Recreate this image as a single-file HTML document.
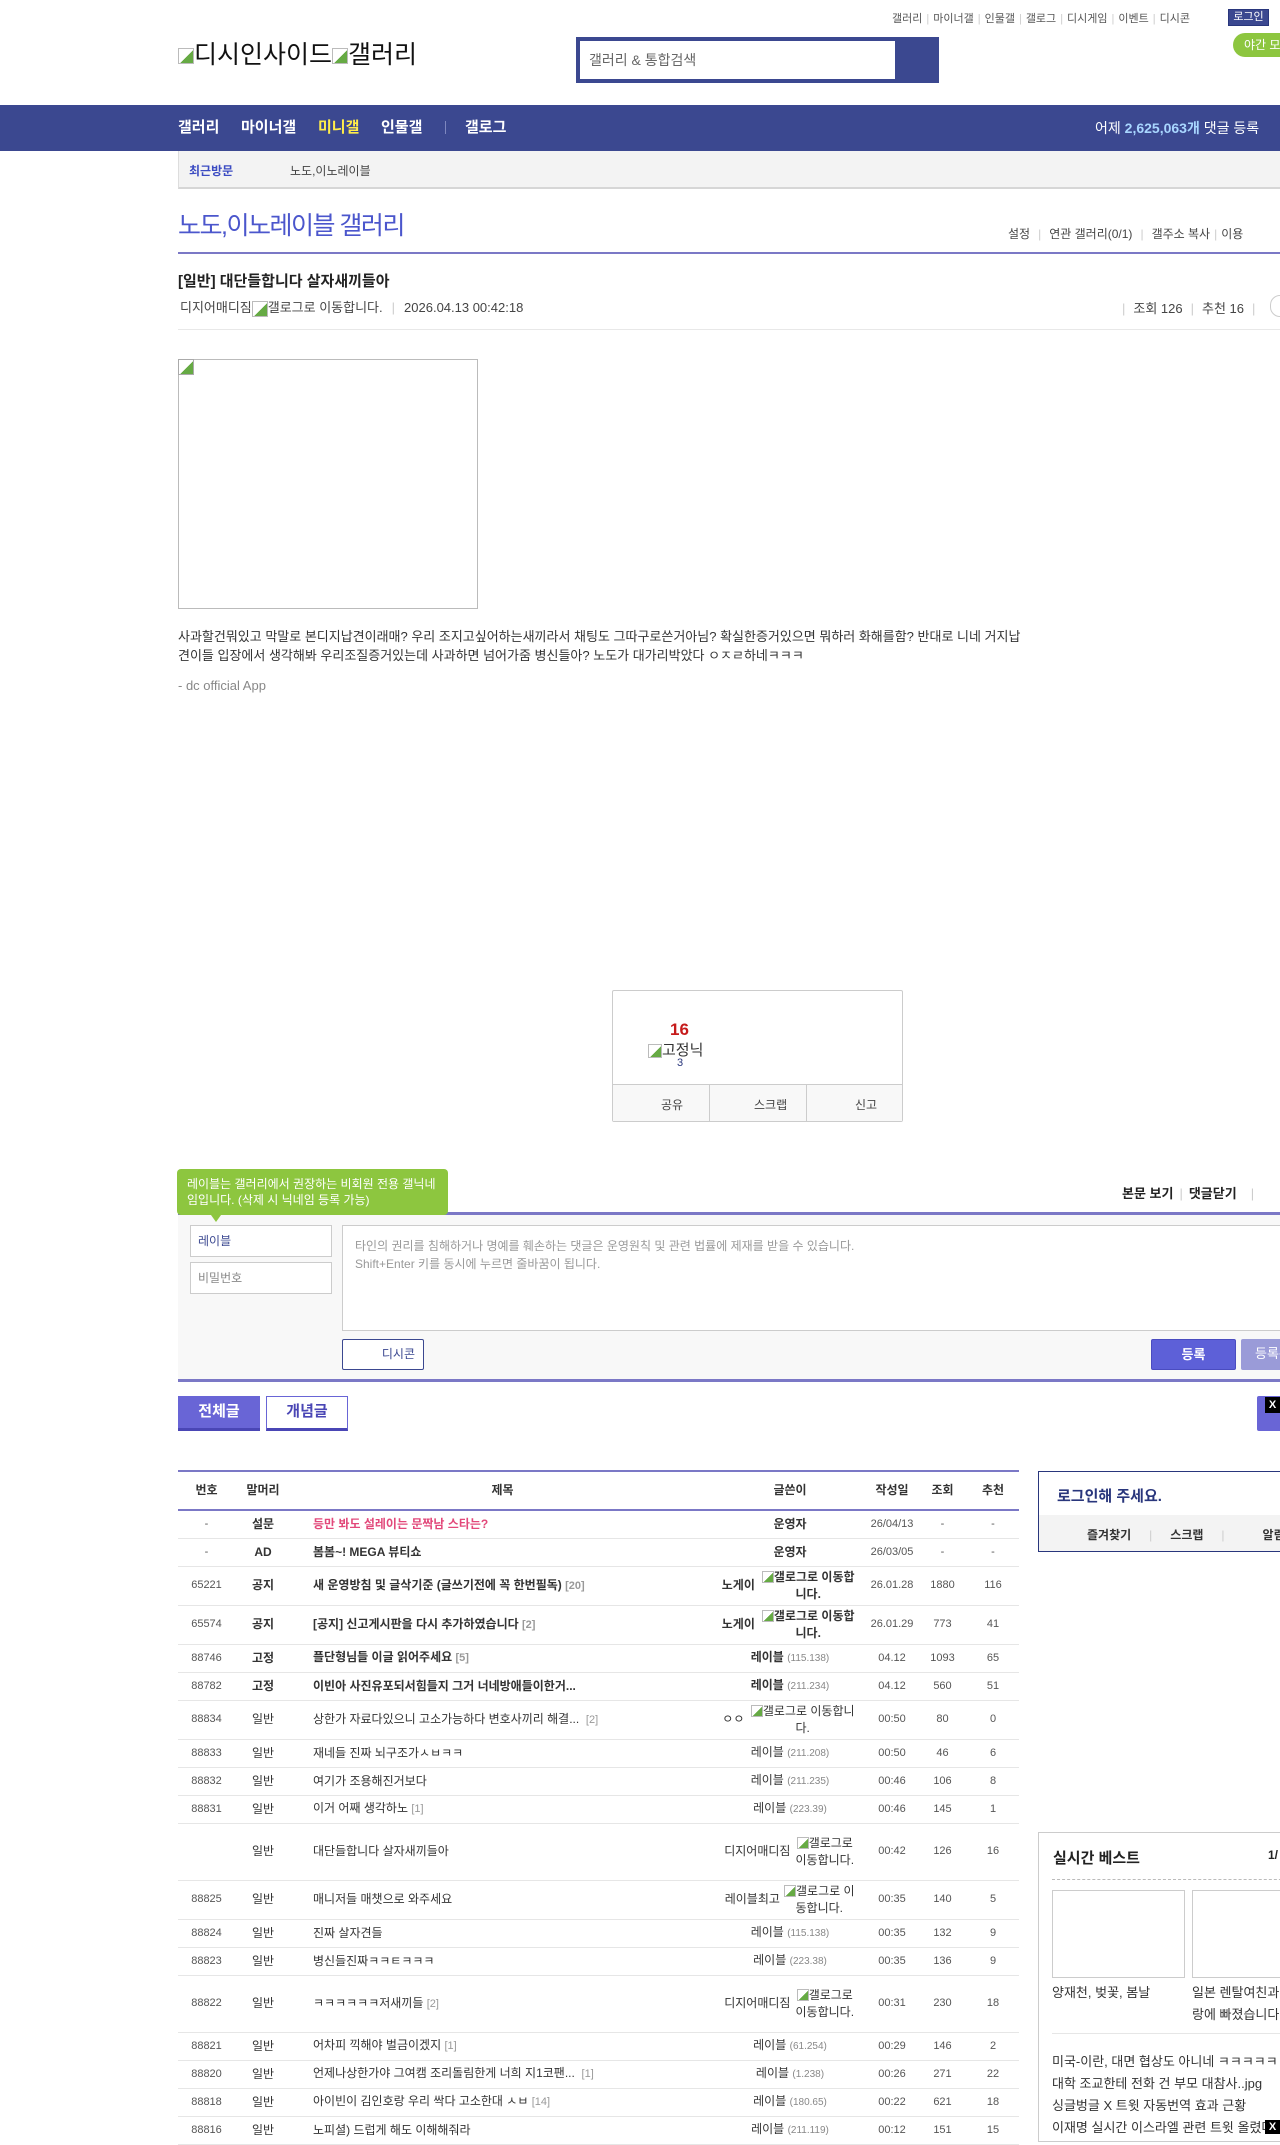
<!DOCTYPE html>
<html><head><meta charset="utf-8">
<style>
*{margin:0;padding:0;box-sizing:border-box}
body{width:1280px;height:2134px;overflow:hidden;position:relative;background:#fff;font-family:"Liberation Sans","Noto Sans CJK KR",sans-serif;font-size:12px;color:#333}
.a{position:absolute;white-space:nowrap}
.tl{font-size:11px;color:#555}
.tl span{color:#ccc;margin:0 4px}
table{border-collapse:collapse;table-layout:fixed;white-space:normal!important}
td,th{font-size:12px;text-align:center;border-bottom:1px solid #e6e6e6;padding:0;line-height:17px}
th{font-weight:bold;color:#333;border-bottom:2px solid #7b78c6;height:38px}
td.t{text-align:left;padding-left:22px;color:#333;white-space:nowrap;overflow:hidden}
td.n{font-size:11px;color:#555}
td.b{font-weight:bold}
.ip{font-size:10px;color:#888}
.rp{color:#999;font-size:11px}
.bi{display:inline-block;width:16px;height:16px;border:1px solid #bbb;vertical-align:middle;background:linear-gradient(135deg,#fff 55%,#6a4 55%)}
</style></head><body>

<!-- top links -->
<div class="a tl" style="left:892px;top:10px">갤러리<span>|</span>마이너갤<span>|</span>인물갤<span>|</span>갤로그<span>|</span>디시게임<span>|</span>이벤트<span>|</span>디시콘</div>
<div class="a" style="left:1228px;top:9px;width:41px;height:17px;background:#3b4890;border:1px solid #29367c;color:#fff;font-size:11px;text-align:center;line-height:15px">로그인</div>
<div class="a" style="left:1233px;top:33px;width:60px;height:24px;background:#8dc63f;border-radius:12px;color:#fff;font-size:12px;line-height:24px;padding-left:11px">야간 모드</div>

<!-- logo -->
<div class="a" style="left:178px;top:40px;font-size:25px;color:#111;line-height:30px"><span class="bi"></span>디시인사이드<span class="bi"></span>갤러리</div>

<!-- search -->
<div class="a" style="left:576px;top:37px;width:363px;height:46px;background:#3b4890"></div>
<div class="a" style="left:580px;top:41px;width:315px;height:38px;background:#fff;font-size:14px;color:#666;line-height:38px;padding-left:9px">갤러리 &amp; 통합검색</div>

<!-- nav -->
<div class="a" style="left:0;top:105px;width:1280px;height:46px;background:#3b4890"></div>
<div class="a" style="left:178px;top:105px;height:46px;line-height:46px;font-size:15px;font-weight:bold;color:#fff">갤러리</div>
<div class="a" style="left:241px;top:105px;line-height:46px;font-size:15px;font-weight:bold;color:#fff">마이너갤</div>
<div class="a" style="left:318px;top:105px;line-height:46px;font-size:15px;font-weight:bold;color:#ffed4a">미니갤</div>
<div class="a" style="left:381px;top:105px;line-height:46px;font-size:15px;font-weight:bold;color:#fff">인물갤</div>
<div class="a" style="left:445px;top:121px;width:1px;height:13px;background:#7e87bf"></div>
<div class="a" style="left:465px;top:105px;line-height:46px;font-size:15px;font-weight:bold;color:#fff">갤로그</div>
<div class="a" style="left:1095px;top:105px;line-height:46px;font-size:14px;color:#fff">어제 <b style="color:#a8d6ff">2,625,063개</b> 댓글 등록</div>

<!-- recent -->
<div class="a" style="left:178px;top:151px;width:1102px;height:38px;background:#f3f3f3;border-left:1px solid #ddd;border-bottom:2px solid #d6d6d6"></div>
<div class="a" style="left:189px;top:162px;font-size:12px;font-weight:bold;color:#3b4bc2">최근방문</div>
<div class="a" style="left:290px;top:162px;font-size:12px;color:#444">노도,이노레이블</div>

<!-- gallery title -->
<div class="a" style="left:178px;top:206px;font-size:25px;color:#4b56cc;letter-spacing:-1.5px">노도,이노레이블 갤러리</div>
<div class="a tl" style="left:1008px;top:225px;font-size:12px;color:#444">설정<span style="margin:0 8px">|</span>연관 갤러리(0/1)<span style="margin:0 8px">|</span>갤주소 복사<span>|</span>이용</div>
<div class="a" style="left:178px;top:252px;width:1102px;height:2px;background:#7b78c6"></div>

<!-- post header -->
<div class="a" style="left:178px;top:270px;font-size:15px;font-weight:bold;color:#222">[일반] 대단들합니다 살자새끼들아</div>
<div class="a" style="left:180px;top:297px;font-size:13px;color:#444">디지어매디짐<span class="bi"></span>갤로그로 이동합니다.<span style="color:#ccc;margin:0 9px">|</span>2026.04.13 00:42:18</div>
<div class="a" style="left:1122px;top:298px;font-size:13px;color:#444"><span style="color:#ccc;margin-right:8px">|</span>조회 126<span style="color:#ccc;margin:0 8px">|</span>추천 16<span style="color:#ccc;margin:0 8px">|</span></div>
<div class="a" style="left:1270px;top:295px;width:20px;height:22px;border:1px solid #ccc;border-radius:11px"></div>
<div class="a" style="left:178px;top:329px;width:1102px;height:1px;background:#e8e8e8"></div>

<!-- body -->
<div class="a" style="left:178px;top:359px;width:300px;height:250px;border:1px solid #bbb"></div>
<div class="a" style="left:178px;top:359px"><span class="bi" style="border-color:#aaa"></span></div>
<div class="a" style="left:178px;top:627px;width:845px;white-space:normal;font-size:13px;line-height:19px;color:#333">사과할건뭐있고 막말로 본디지납견이래매? 우리 조지고싶어하는새끼라서 채팅도 그따구로쓴거아님? 확실한증거있으면 뭐하러 화해를함? 반대로 니네 거지납견이들 입장에서 생각해봐 우리조질증거있는데 사과하면 넘어가줌 병신들아? 노도가 대가리박았다 ㅇㅈㄹ하네ㅋㅋㅋ</div>
<div class="a" style="left:178px;top:678px;font-size:13px;color:#888">- dc official App</div>

<!-- recommend box -->
<div class="a" style="left:612px;top:990px;width:291px;height:132px;border:1px solid #ccc;border-radius:2px"></div>
<div class="a" style="left:613px;top:1084px;width:289px;height:37px;background:#f8f8f8;border-top:1px solid #ccc"></div>
<div class="a" style="left:709px;top:1084px;width:1px;height:37px;background:#ccc"></div>
<div class="a" style="left:806px;top:1084px;width:1px;height:37px;background:#ccc"></div>
<div class="a" style="left:661px;top:1096px;font-size:12px;color:#444">공유</div>
<div class="a" style="left:754px;top:1096px;font-size:12px;color:#444">스크랩</div>
<div class="a" style="left:855px;top:1096px;font-size:12px;color:#444">신고</div>
<div class="a" style="left:670px;top:1020px;font-size:17px;font-weight:bold;color:#c61b1b">16</div>
<div class="a" style="left:648px;top:1039px;font-size:15px;color:#333"><span class="bi" style="width:14px;height:14px"></span>고정닉</div>
<div class="a" style="left:677px;top:1057px;font-size:11px;color:#29367c">3</div>

<!-- comment area -->
<div class="a" style="left:178px;top:1212px;width:1102px;height:170px;background:#f8f8f8;border-top:3px solid #7b78c6;border-bottom:3px solid #7b78c6"></div>
<div class="a" style="left:178px;top:1184px;font-size:14px;font-weight:bold;color:#222">전체 댓글 0 개</div>
<div class="a" style="left:1122px;top:1183px;font-size:13px;font-weight:bold;color:#222">본문 보기<span style="color:#ccc;font-weight:normal;margin:0 6px">|</span>댓글닫기<span style="color:#ccc;font-weight:normal;margin:0 14px">|</span></div>
<div class="a" style="left:177px;top:1169px;width:271px;height:46px;background:#8dc63f;border-radius:4px;color:#fff;font-size:12px;line-height:16px;padding:7px 10px;white-space:normal">레이블는 갤러리에서 권장하는 비회원 전용 갤닉네임입니다. (삭제 시 닉네임 등록 가능)</div>
<div class="a" style="left:211px;top:1215px;width:0;height:0;border-left:5px solid transparent;border-right:5px solid transparent;border-top:7px solid #8dc63f"></div>
<div class="a" style="left:190px;top:1225px;width:142px;height:32px;background:#fff;border:1px solid #ccc;font-size:12px;color:#3b4890;line-height:30px;padding-left:7px">레이블</div>
<div class="a" style="left:190px;top:1262px;width:142px;height:32px;background:#fff;border:1px solid #ccc;font-size:12px;color:#888;line-height:30px;padding-left:7px">비밀번호</div>
<div class="a" style="left:342px;top:1225px;width:950px;height:106px;background:#fff;border:1px solid #ccc;font-size:12px;color:#999;line-height:18px;padding:11px 12px;white-space:normal">타인의 권리를 침해하거나 명예를 훼손하는 댓글은 운영원칙 및 관련 법률에 제재를 받을 수 있습니다.<br>Shift+Enter 키를 동시에 누르면 줄바꿈이 됩니다.</div>
<div class="a" style="left:342px;top:1339px;width:82px;height:31px;background:#fff;border:1px solid #3b4890;border-radius:2px;font-size:12px;color:#3b4890;line-height:29px;text-align:right;padding-right:8px">디시콘</div>
<div class="a" style="left:1151px;top:1339px;width:85px;height:31px;background:#5d60d8;border:1px solid #4a4cc0;border-radius:2px;font-size:13px;font-weight:bold;color:#fff;line-height:29px;text-align:center">등록</div>
<div class="a" style="left:1241px;top:1339px;width:60px;height:31px;background:#9a9bd8;border-radius:2px;font-size:13px;color:#fff;line-height:29px;padding-left:14px">등록+추천</div>

<!-- tabs -->
<div class="a" style="left:178px;top:1396px;width:82px;height:35px;background:#6965d6;border-bottom:3px solid #4a46b5;color:#fff;font-size:15px;font-weight:bold;text-align:center;line-height:32px">전체글</div>
<div class="a" style="left:266px;top:1396px;width:82px;height:35px;background:#fff;border:1px solid #6965d6;border-bottom:3px solid #4a46b5;color:#4a46b5;font-size:15px;font-weight:bold;text-align:center;line-height:30px">개념글</div>
<div class="a" style="left:1257px;top:1396px;width:30px;height:35px;background:#6965d6;border-radius:2px"></div>
<div class="a" style="left:1265px;top:1397px;width:15px;height:16px;background:#000;color:#fff;font-size:11px;font-weight:bold;text-align:center;line-height:16px">X</div>

<!-- list table -->
<div class="a" style="left:178px;top:1470px;width:841px;height:2px;background:#7b78c6"></div>
<table class="a" style="left:178px;top:1472px;width:841px">
<colgroup><col style="width:57px"><col style="width:56px"><col style="width:423px"><col style="width:152px"><col style="width:52px"><col style="width:49px"><col style="width:52px"></colgroup>
<tr><th>번호</th><th>말머리</th><th>제목</th><th>글쓴이</th><th>작성일</th><th>조회</th><th>추천</th></tr>
<tr style="height:28px"><td class="n">-</td><td class="b">설문</td><td class="t b" style="color:#e2487a">등만 봐도 설레이는 문짝남 스타는?</td><td class="b">운영자</td><td class="n">26/04/13</td><td class="n">-</td><td class="n">-</td></tr>
<tr style="height:28px"><td class="n">-</td><td class="b">AD</td><td class="t b">봄봄~! MEGA 뷰티쇼</td><td class="b">운영자</td><td class="n">26/03/05</td><td class="n">-</td><td class="n">-</td></tr>
<tr style="height:39px"><td class="n">65221</td><td class="b">공지</td><td class="t b">새 운영방침 및 글삭기준 (글쓰기전에 꼭 한번필독) <span class="rp">[20]</span></td><td class="b">노게이 <span style="display:inline-block;width:100px;vertical-align:middle"><span class="bi" style="width:12px;height:12px"></span>갤로그로 이동합니다.</span></td><td class="n">26.01.28</td><td class="n">1880</td><td class="n">116</td></tr>
<tr style="height:39px"><td class="n">65574</td><td class="b">공지</td><td class="t b">[공지] 신고게시판을 다시 추가하였습니다 <span class="rp">[2]</span></td><td class="b">노게이 <span style="display:inline-block;width:100px;vertical-align:middle"><span class="bi" style="width:12px;height:12px"></span>갤로그로 이동합니다.</span></td><td class="n">26.01.29</td><td class="n">773</td><td class="n">41</td></tr>
<tr style="height:28px"><td class="n">88746</td><td class="b">고정</td><td class="t b">플단형님들 이글 읽어주세요 <span class="rp">[5]</span></td><td><b>레이블</b> <span class="ip">(115.138)</span></td><td class="n">04.12</td><td class="n">1093</td><td class="n">65</td></tr>
<tr style="height:28px"><td class="n">88782</td><td class="b">고정</td><td class="t b">이빈아 사진유포되서힘들지 그거 너네방애들이한거...</td><td><b>레이블</b> <span class="ip">(211.234)</span></td><td class="n">04.12</td><td class="n">560</td><td class="n">51</td></tr>
<tr style="height:39px"><td class="n">88834</td><td>일반</td><td class="t">상한가 자료다있으니 고소가능하다 변호사끼리 해결... &nbsp;<span class="rp">[2]</span></td><td>ㅇㅇ <span style="display:inline-block;width:110px;vertical-align:middle"><span class="bi" style="width:12px;height:12px"></span>갤로그로 이동합니다.</span></td><td class="n">00:50</td><td class="n">80</td><td class="n">0</td></tr>
<tr style="height:28px"><td class="n">88833</td><td>일반</td><td class="t">재네들 진짜 뇌구조가ㅅㅂㅋㅋ</td><td>레이블 <span class="ip">(211.208)</span></td><td class="n">00:50</td><td class="n">46</td><td class="n">6</td></tr>
<tr style="height:28px"><td class="n">88832</td><td>일반</td><td class="t">여기가 조용해진거보다</td><td>레이블 <span class="ip">(211.235)</span></td><td class="n">00:46</td><td class="n">106</td><td class="n">8</td></tr>
<tr style="height:28px"><td class="n">88831</td><td>일반</td><td class="t">이거 어째 생각하노 <span class="rp">[1]</span></td><td>레이블 <span class="ip">(223.39)</span></td><td class="n">00:46</td><td class="n">145</td><td class="n">1</td></tr>
<tr style="height:57px"><td class="n"></td><td>일반</td><td class="t">대단들합니다 살자새끼들아</td><td>디지어매디짐 <span style="display:inline-block;width:62px;vertical-align:middle"><span class="bi" style="width:12px;height:12px"></span>갤로그로 이동합니다.</span></td><td class="n">00:42</td><td class="n">126</td><td class="n">16</td></tr>
<tr style="height:39px"><td class="n">88825</td><td>일반</td><td class="t">매니저들 매챗으로 와주세요</td><td>레이블최고 <span style="display:inline-block;width:72px;vertical-align:middle"><span class="bi" style="width:12px;height:12px"></span>갤로그로 이동합니다.</span></td><td class="n">00:35</td><td class="n">140</td><td class="n">5</td></tr>
<tr style="height:28px"><td class="n">88824</td><td>일반</td><td class="t">진짜 살자견들</td><td>레이블 <span class="ip">(115.138)</span></td><td class="n">00:35</td><td class="n">132</td><td class="n">9</td></tr>
<tr style="height:28px"><td class="n">88823</td><td>일반</td><td class="t">병신들진짜ㅋㅋㅌㅋㅋㅋ</td><td>레이블 <span class="ip">(223.38)</span></td><td class="n">00:35</td><td class="n">136</td><td class="n">9</td></tr>
<tr style="height:57px"><td class="n">88822</td><td>일반</td><td class="t">ㅋㅋㅋㅋㅋㅋ저새끼들 <span class="rp">[2]</span></td><td>디지어매디짐 <span style="display:inline-block;width:62px;vertical-align:middle"><span class="bi" style="width:12px;height:12px"></span>갤로그로 이동합니다.</span></td><td class="n">00:31</td><td class="n">230</td><td class="n">18</td></tr>
<tr style="height:28px"><td class="n">88821</td><td>일반</td><td class="t">어차피 끽해야 벌금이겠지 <span class="rp">[1]</span></td><td>레이블 <span class="ip">(61.254)</span></td><td class="n">00:29</td><td class="n">146</td><td class="n">2</td></tr>
<tr style="height:28px"><td class="n">88820</td><td>일반</td><td class="t">언제나상한가야 그여캠 조리돌림한게 너희 지1코팬... &nbsp;<span class="rp">[1]</span></td><td>레이블 <span class="ip">(1.238)</span></td><td class="n">00:26</td><td class="n">271</td><td class="n">22</td></tr>
<tr style="height:28px"><td class="n">88818</td><td>일반</td><td class="t">아이빈이 김인호랑 우리 싹다 고소한대 ㅅㅂ <span class="rp">[14]</span></td><td>레이블 <span class="ip">(180.65)</span></td><td class="n">00:22</td><td class="n">621</td><td class="n">18</td></tr>
<tr style="height:28px"><td class="n">88816</td><td>일반</td><td class="t">노피셜) 드럽게 해도 이해해줘라</td><td>레이블 <span class="ip">(211.119)</span></td><td class="n">00:12</td><td class="n">151</td><td class="n">15</td></tr>
</table>

<!-- right login box -->
<div class="a" style="left:1038px;top:1471px;width:260px;height:81px;border:1px solid #29367c"></div>
<div class="a" style="left:1039px;top:1515px;width:250px;height:36px;background:#f3f3f3"></div>
<div class="a" style="left:1057px;top:1485px;font-size:15px;font-weight:bold;color:#29367c">로그인해 주세요.</div>
<div class="a" style="left:1087px;top:1526px;font-size:12px;font-weight:bold;color:#333">즐겨찾기<span style="color:#ccc;font-weight:normal;margin:0 18px">|</span>스크랩<span style="color:#ccc;font-weight:normal;margin:0 18px">|</span>&nbsp;&nbsp;&nbsp;&nbsp;&nbsp;&nbsp;알림</div>

<!-- realtime best -->
<div class="a" style="left:1038px;top:1832px;width:260px;height:310px;border:1px solid #ccc"></div>
<div class="a" style="left:1053px;top:1847px;font-size:15px;font-weight:bold;color:#222">실시간 베스트</div>
<div class="a" style="left:1268px;top:1848px;font-size:12px;font-weight:bold;color:#222">1/</div>
<div class="a" style="left:1052px;top:1879px;width:240px;border-top:1px dashed #bbb"></div>
<div class="a" style="left:1052px;top:1890px;width:133px;height:88px;border:1px solid #ccc"></div>
<div class="a" style="left:1192px;top:1890px;width:100px;height:88px;border:1px solid #ccc"></div>
<div class="a" style="left:1052px;top:1982px;font-size:13px;color:#333">양재천, 벚꽃, 봄날</div>
<div class="a" style="left:1192px;top:1982px;font-size:13px;color:#333;line-height:22px">일본 렌탈여친과<br>랑에 빠졌습니다</div>
<div class="a" style="left:1052px;top:2033px;width:240px;height:1px;background:#e6e6e6"></div>
<div class="a" style="left:1052px;top:2051px;font-size:13px;color:#333;line-height:22px">미국-이란, 대면 협상도 아니네 ㅋㅋㅋㅋㅋㅋ<br>대학 조교한테 전화 건 부모 대참사..jpg<br>싱글벙글 X 트윗 자동번역 효과 근황<br>이재명 실시간 이스라엘 관련 트윗 올렸다</div>
<div class="a" style="left:1265px;top:2120px;width:15px;height:14px;background:#000;color:#fff;font-size:11px;font-weight:bold;text-align:center;line-height:14px">X</div>

</body></html>
